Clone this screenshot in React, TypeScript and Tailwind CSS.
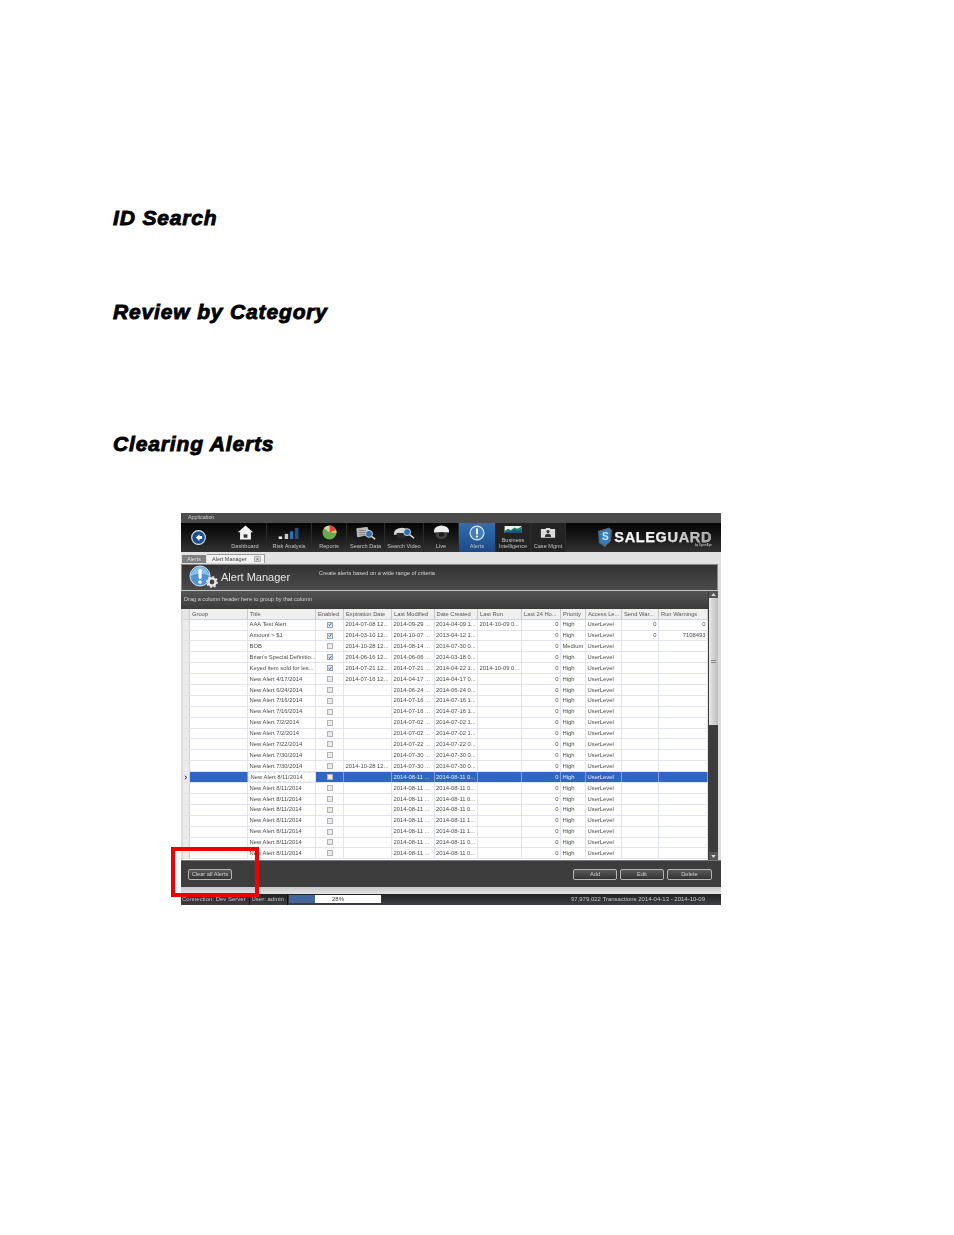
import React from "react";

type Row = { t: string; en?: boolean; exp?: string; mod: string; cr: string; lr?: string; p?: string; send?: string; run?: string; sel?: boolean };

const cols = "grid grid-cols-[7px_58px_68px_28px_48px_42.5px_43.5px_44px_39px_25px_36px_37px_49px]";

const a = (t: string, mod: string, cr: string, exp?: string): Row => ({ t, mod, cr, exp });

const rows: Row[] = [
  { t: "AAA Test Alert", en: true, exp: "2014-07-08 12...", mod: "2014-09-29 ...", cr: "2014-04-09 1...", lr: "2014-10-09 0...", send: "0", run: "0" },
  { t: "Amount > $1", en: true, exp: "2014-03-10 12...", mod: "2014-10-07 ...", cr: "2013-04-12 1...", send: "0", run: "7108493" },
  { t: "BOB", exp: "2014-10-28 12...", mod: "2014-08-14 ...", cr: "2014-07-30 0...", p: "Medium" },
  { t: "Brian's Special Definitio...", en: true, exp: "2014-06-16 12...", mod: "2014-06-06 ...", cr: "2014-03-18 0..." },
  { t: "Keyed item sold for les...", en: true, exp: "2014-07-21 12...", mod: "2014-07-21 ...", cr: "2014-04-22 1...", lr: "2014-10-09 0..." },
  a("New Alert 4/17/2014", "2014-04-17 ...", "2014-04-17 0...", "2014-07-16 12..."),
  a("New Alert 6/24/2014", "2014-06-24 ...", "2014-06-24 0..."),
  a("New Alert 7/16/2014", "2014-07-16 ...", "2014-07-16 1..."),
  a("New Alert 7/16/2014", "2014-07-16 ...", "2014-07-16 1..."),
  a("New Alert 7/2/2014", "2014-07-02 ...", "2014-07-02 1..."),
  a("New Alert 7/2/2014", "2014-07-02 ...", "2014-07-02 1..."),
  a("New Alert 7/22/2014", "2014-07-22 ...", "2014-07-22 0..."),
  a("New Alert 7/30/2014", "2014-07-30 ...", "2014-07-30 0..."),
  a("New Alert 7/30/2014", "2014-07-30 ...", "2014-07-30 0...", "2014-10-28 12..."),
  { t: "New Alert 8/11/2014", mod: "2014-08-11 ...", cr: "2014-08-11 0...", sel: true },
  a("New Alert 8/11/2014", "2014-08-11 ...", "2014-08-11 0..."),
  a("New Alert 8/11/2014", "2014-08-11 ...", "2014-08-11 0..."),
  a("New Alert 8/11/2014", "2014-08-11 ...", "2014-08-11 0..."),
  a("New Alert 8/11/2014", "2014-08-11 ...", "2014-08-11 1..."),
  a("New Alert 8/11/2014", "2014-08-11 ...", "2014-08-11 1..."),
  a("New Alert 8/11/2014", "2014-08-11 ...", "2014-08-11 0..."),
  a("New Alert 8/11/2014", "2014-08-11 ...", "2014-08-11 0..."),
];

const heads = ["", "Group", "Title", "Enabled", "Expiration Date", "Last Modified", "Date Created", "Last Run", "Last 24 Ho...", "Priority", "Access Le...", "Send War...", "Run Warnings"];

function Cell({ children, right, sel, className = "" }: { children?: React.ReactNode; right?: boolean; sel?: boolean; className?: string }) {
  return (
    <div className={`flex items-center overflow-hidden whitespace-nowrap px-[1.5px] border-r ${sel ? "border-[#7e9fd8] text-[#e8eefa]" : "border-[#dfe4ee]"} ${right ? "justify-end" : ""} ${className}`}>
      {children}
    </div>
  );
}

function Check({ on }: { on?: boolean }) {
  return (
    <span className={`flex h-[6px] w-[6px] items-center justify-center border ${on ? "border-[#9aa4b0] bg-[#dfe8f4]" : "border-[#b4b4b4] bg-[#ececec]"}`}>
      {on && (
        <svg viewBox="0 0 6 6" className="h-[5px] w-[5px]">
          <path d="M1 3l1.400 1.600L5 1" fill="none" stroke="#2b4f93" strokeWidth="1.300" />
        </svg>
      )}
    </span>
  );
}

function Tool({ w, label, icon, active, light }: { w: string; label: React.ReactNode; icon: React.ReactNode; active?: boolean; light?: boolean }) {
  return (
    <div className={`${w} flex h-full flex-col items-center justify-between border-r border-[#2b2b2b] pb-[2px] pt-[1.500px] ${active ? "bg-gradient-to-b from-[#2f6fb3] to-[#1c4a86]" : light ? "bg-[#232323]" : ""}`}>
      <div className="flex h-[17px] items-center justify-center">{icon}</div>
      <div className="whitespace-nowrap text-center text-[5.600px] leading-[5.800px] text-[#c4c4c4]">{label}</div>
    </div>
  );
}

function Btn({ children, w }: { children: string; w: string }) {
  return (
    <div className={`${w} flex h-[11px] items-center justify-center rounded-[2px] border border-[#b5b5b5] bg-gradient-to-b from-[#5a5a5a] to-[#333333] text-[5.700px] text-[#d0d0d0]`}>
      {children}
    </div>
  );
}

const heading = "text-[21px] font-bold italic leading-[24px] tracking-[0.85px] text-black [-webkit-text-stroke:0.9px_black]";

export default function App() {
  return (
    <div className="h-[1235px] w-[954px] overflow-hidden bg-white font-['Liberation_Sans',Arial,sans-serif]">
      <div className="pl-[113px] pt-[206px]">
        <h2 className={heading}>ID Search</h2>
        <h2 className={`${heading} mt-[70px]`}>Review by Category</h2>
        <h2 className={`${heading} mt-[108px]`}>Clearing Alerts</h2>
      </div>

      <div className="relative ml-[181px] mt-[57px] w-[540px] text-[#3a3a3a]">
        <div className="blur-[0.25px]">
          {/* title bar */}
          <div className="flex h-[9.500px] items-center bg-[#4c4c4c] pb-[1px] pl-[7px] text-[5.400px] text-[#cfcfcf]">Application</div>

          {/* toolbar */}
          <div className="flex h-[29px] items-stretch bg-gradient-to-b from-[#050505] to-[#333333]">
            <div className="flex w-[43px] items-center justify-center pr-[9px]">
              <svg viewBox="0 0 16 16" className="h-[15px] w-[15px]">
                <circle cx="8" cy="8" r="7.300" fill="#1d4f8f" stroke="#dfe6ee" strokeWidth="1.200" />
                <path d="M9 4.400L5.200 8 9 11.600V9.500h2.800v-3H9z" fill="#fff" />
              </svg>
            </div>
            <Tool w="w-[43px]" label="Dashboard" icon={
              <svg viewBox="0 0 18 16" className="h-[15px] w-[17px]">
                <path d="M9 .5L.8 7.800h2.400V15.500h11.600V7.800h2.400z" fill="#f4f4f4" />
                <rect x="7" y="10" width="4" height="3.500" fill="#333" />
              </svg>
            } />
            <Tool w="w-[45px]" label="Risk Analysis" icon={
              <svg viewBox="0 0 26 14" className="h-[12px] w-[24px]">
                <rect x="1" y="11" width="4" height="3" fill="#e8e8e8" />
                <rect x="8" y="8" width="4" height="6" fill="#c9c9c9" />
                <rect x="14" y="5" width="4" height="9" fill="#2f6fb3" />
                <rect x="20" y="1" width="4" height="13" fill="#23528f" />
              </svg>
            } />
            <Tool w="w-[35px]" label="Reports" icon={
              <svg viewBox="0 0 18 16" className="h-[15px] w-[17px]">
                <circle cx="9" cy="8" r="7.500" fill="#6aa84f" />
                <path d="M9 8V.5a7.500 7.500 0 0 1 7 5z" fill="#e0483a" />
                <path d="M9 8l7-2.500a7.500 7.500 0 0 1 .5 3z" fill="#f0c33c" />
                <path d="M3 3.500A7.500 7.500 0 0 1 9 .5V8z" fill="#d9d1a8" />
              </svg>
            } />
            <Tool w="w-[38px]" label="Search Data" icon={
              <svg viewBox="0 0 26 16" className="h-[14px] w-[23px]">
                <path d="M3 3l12-1.500 3 8-14 3z" fill="#bcbcbc" stroke="#eee" strokeWidth=".6" />
                <path d="M5 5h8M5 7.500h9M6 10h8" stroke="#666" strokeWidth=".8" />
                <circle cx="17" cy="9" r="4" fill="#2f6fb3" stroke="#ddd" />
                <path d="M20 12l4 3" stroke="#eee" strokeWidth="1.600" />
              </svg>
            } />
            <Tool w="w-[39px]" label="Search Video" icon={
              <svg viewBox="0 0 26 16" className="h-[14px] w-[23px]">
                <path d="M1 8a9 6 0 0 1 18 0v2H1z" fill="#d8d8d8" />
                <path d="M4 8h11v3a5.500 3 0 0 1-11 0z" fill="#2a2a2a" />
                <circle cx="16" cy="7" r="4" fill="#2f6fb3" stroke="#ddd" />
                <path d="M19 10l5 4" stroke="#eee" strokeWidth="1.600" />
              </svg>
            } />
            <Tool w="w-[35px]" label="Live" icon={
              <svg viewBox="0 0 18 16" className="h-[15px] w-[17px]">
                <path d="M1 6a8 5.500 0 0 1 16 0v2H1z" fill="#ececec" />
                <path d="M3 8h12v2a6 5 0 0 1-12 0z" fill="#444" />
                <ellipse cx="9" cy="10" rx="3" ry="2.400" fill="#1d1d1d" />
              </svg>
            } />
            <Tool w="w-[37px]" active label="Alerts" icon={
              <svg viewBox="0 0 18 18" className="h-[16px] w-[16px]">
                <circle cx="9" cy="9" r="7.800" fill="#3f7fc0" stroke="#e6edf5" strokeWidth="1.300" />
                <rect x="7.900" y="3.600" width="2.200" height="7" rx="1" fill="#fff" />
                <circle cx="9" cy="13" r="1.300" fill="#fff" />
              </svg>
            } />
            <Tool w="w-[35px]" light label={<><span className="block">Business</span><span className="block">Intelligence</span></>} icon={
              <svg viewBox="0 0 24 10" className="mt-[-2px] h-[7px] w-[22px]">
                <rect width="24" height="10" fill="#f2f2f2" />
                <path d="M0 7l5-3 4 2 5-4 4 2 6-3v9H0z" fill="#1d8a5c" />
                <path d="M0 9l5-2 4 1 5-3 4 2 6-2v5H0z" fill="#1d4f8f" />
              </svg>
            } />
            <Tool w="w-[35px]" light label="Case Mgmt" icon={
              <svg viewBox="0 0 18 12" className="h-[11px] w-[16px]">
                <path d="M1 2h5l1-1h4l1 1h5v10H1z" fill="#dcdcdc" />
                <circle cx="9" cy="5" r="1.800" fill="#333" />
                <path d="M5.500 11a3.500 3.500 0 0 1 7 0z" fill="#333" />
              </svg>
            } />
            <div className="flex flex-1 items-center justify-end pr-[9px]">
              <svg viewBox="0 0 16 20" className="mr-[1.500px] h-[20px] w-[16px]">
                <path d="M1 4l11-3.500 3 2.500-1 11-6 6-6-4z" fill="#5b6670" />
                <path d="M2.800 5l8.500-2.700 2 1.700-1 9.800-4.800 4.800-4-3z" fill="#2f7fc4" />
                <text x="5" y="13" fontSize="10" fontWeight="700" fill="#cfe6f8" fontFamily="Liberation Sans">S</text>
              </svg>
              <div className="relative">
                <div className="bg-gradient-to-r from-white from-40% to-[#9a9a9a] bg-clip-text text-[14.500px] font-bold leading-[15px] tracking-[0.65px] text-transparent [-webkit-text-stroke:0.25px_#d8d8d8]">SALEGUARD</div>
                <div className="absolute right-0 top-[13.500px] text-[3px] font-bold leading-[4px] text-[#bbbbbb]">by OpenEye</div>
              </div>
            </div>
          </div>

          {/* tab strip */}
          <div className="flex h-[11.500px] items-end bg-[#e2e2e2] pl-[1px] text-[5.500px]">
            <div className="flex h-[8px] w-[24px] items-center justify-center bg-[#7f7f7f] text-[#dddddd]">Alerts</div>
            <div className="ml-[1px] flex h-[9px] w-[58px] items-center justify-between border-r border-t border-[#9c9c9c] bg-[#f2f2f2] pl-[5px] pr-[3px] text-[#444]">
              <span>Alert Manager</span>
              <span className="flex h-[6px] w-[7px] items-center justify-center rounded-[1px] border border-[#aaa] bg-[#ddd] text-[5px] leading-none">×</span>
            </div>
          </div>

          {/* main panel */}
          <div className="bg-[#dcdcdc]">
            <div className="pr-[3px] pt-[0.500px]">
              <div className="flex h-[26px] items-start border border-b-0 border-[#8a8a8a] bg-gradient-to-b from-[#323232] to-[#4b4b4b] pl-[7px] pr-[2px]">
                <div className="mt-[0.500px] h-[23px] w-[30px] shrink-0">
                  <svg viewBox="0 0 30 23" className="h-[23px] w-[30px]">
                    <circle cx="11" cy="11" r="10" fill="#4b93d6" stroke="#dfe9f4" strokeWidth="1" />
                    <path d="M2 11a9 9 0 0 1 18 0c-5-3-12-3-18 0z" fill="#8cc0ec" />
                    <rect x="9.500" y="4" width="3.200" height="10" rx="1.400" fill="#fff" />
                    <circle cx="11" cy="17" r="1.800" fill="#fff" />
                    <circle cx="23" cy="17" r="3.600" fill="none" stroke="#e8e8e8" strokeWidth="2.400" />
                    <circle cx="23" cy="17" r="5.200" fill="none" stroke="#e8e8e8" strokeWidth="1.500" strokeDasharray="2 2" />
                  </svg>
                </div>
                <div className="ml-[2px] mt-[6px] whitespace-nowrap text-[11px] leading-[13px] text-[#e6e6e6]">Alert Manager</div>
                <div className="ml-[29px] mt-[5.500px] whitespace-nowrap text-[5.650px] leading-[7px] text-[#d6d6d6]">Create alerts based on a wide range of criteria</div>
              </div>
              <div className="flex border-t border-[#c4c4c4] bg-[#3c3c3c]">
                <div className="min-w-0 flex-1">
                  <div className="flex h-[18.700px] items-center bg-gradient-to-b from-[#555555] to-[#3b3b3b] pb-[1.200px] pl-[3px] text-[5.600px] text-[#d4d4d4]">Drag a column header here to group by that column</div>
                  <div className="bg-[#dcdcdc] pl-[2px]">
                    <div className="bg-white pb-[0.800px]">
                      <div className={`${cols} h-[10.500px] border-b border-[#cfd5df] bg-[#f0f0f0] text-[5.750px] text-[#555]`}>
                        {heads.map((h, i) => (
                          <div key={i} className={`flex items-center overflow-hidden whitespace-nowrap border-r border-[#c9c9c9] ${i === 0 ? "bg-[#e6e6e6]" : "px-[2px]"}`}>{h}</div>
                        ))}
                      </div>
                      {rows.map((r, i) => (
                        <div key={i} className={`${cols} h-[10.900px] border-b border-[#dfe4ee] text-[5.850px] ${r.sel ? "bg-[#2f66c2] text-[#e8eefa]" : "text-[#4a4a4a]"}`}>
                          <div className="flex items-center justify-center border-r border-[#cfcfcf] bg-[#ececec] text-[#333]">
                            {r.sel && (
                              <svg viewBox="0 0 5 6" className="h-[5px] w-[4px]">
                                <path d="M1 .8L3.600 3 1 5.200" fill="none" stroke="#222" strokeWidth="1.100" />
                              </svg>
                            )}
                          </div>
                          <Cell sel={r.sel} />
                          {r.sel ? (
                            <Cell className="border border-dashed border-[#aaaaaa] bg-white text-[#4a4a4a]">{r.t}</Cell>
                          ) : (
                            <Cell>{r.t}</Cell>
                          )}
                          <Cell sel={r.sel} className="justify-center"><Check on={r.en} /></Cell>
                          <Cell sel={r.sel}>{r.exp}</Cell>
                          <Cell sel={r.sel}>{r.mod}</Cell>
                          <Cell sel={r.sel}>{r.cr}</Cell>
                          <Cell sel={r.sel}>{r.lr}</Cell>
                          <Cell sel={r.sel} right>0</Cell>
                          <Cell sel={r.sel}>{r.p ?? "High"}</Cell>
                          <Cell sel={r.sel}>UserLevel</Cell>
                          <Cell sel={r.sel} right>{r.send}</Cell>
                          <Cell sel={r.sel} right>{r.run}</Cell>
                        </div>
                      ))}
                    </div>
                  </div>
                </div>
                {/* scrollbar */}
                <div className="flex w-[10px] shrink-0 flex-col pl-[1px]">
                  <div className="flex h-[7px] items-center justify-center bg-[#555]">
                    <svg viewBox="0 0 6 4" className="h-[3px] w-[5px]"><path d="M3 0l3 4H0z" fill="#ddd" /></svg>
                  </div>
                  <div className="flex h-[127px] items-center justify-center bg-gradient-to-r from-[#e8e8e8] to-[#bdbdbd]">
                    <div className="h-[3px] w-[5px] border-y border-[#888]" />
                  </div>
                  <div className="flex-1" />
                  <div className="flex h-[8px] items-center justify-center bg-[#555]">
                    <svg viewBox="0 0 6 4" className="h-[3px] w-[5px]"><path d="M3 4l3-4H0z" fill="#ddd" /></svg>
                  </div>
                </div>
              </div>
            </div>
            <div className="flex h-[27px] items-center justify-between border-t border-[#777] bg-[#3d3d3d] pl-[7px] pr-[9px]">
              <Btn w="w-[44px]">Clear all Alerts</Btn>
              <div className="flex gap-[3px]">
                <Btn w="w-[44px]">Add</Btn>
                <Btn w="w-[44px]">Edit</Btn>
                <Btn w="w-[45px]">Delete</Btn>
              </div>
            </div>
          </div>
          <div className="h-[7px] bg-gradient-to-b from-[#c8c8c8] to-[#e4e4e4]" />

          {/* status bar */}
          <div className="flex h-[10.500px] items-center bg-gradient-to-b from-[#222222] to-[#3c4046] text-[6px] leading-none text-[#c8c8c8]">
            <div className="flex h-full w-[68.500px] items-center whitespace-nowrap border-r border-[#111] pl-[1px]">Connection: Dev Server</div>
            <div className="flex h-full w-[38.500px] items-center whitespace-nowrap border-r border-[#111] pl-[2px]">User: admin</div>
            <div className="ml-[1px] flex h-[8px] w-[92px] bg-white">
              <div className="h-full w-[26px] bg-[#44669f]" />
              <div className="flex-1 pr-[20px] text-center leading-[8px] text-[#444]">28%</div>
            </div>
            <div className="flex-1 whitespace-nowrap pr-[16px] text-right">97,979,022 Transactions 2014-04-13 - 2014-10-09</div>
          </div>
        </div>

        {/* red callout */}
        <div className="absolute left-[-10px] top-[334px] h-[50px] w-[88px] border-[4.500px] border-[#ee0000]" />
      </div>
    </div>
  );
}
